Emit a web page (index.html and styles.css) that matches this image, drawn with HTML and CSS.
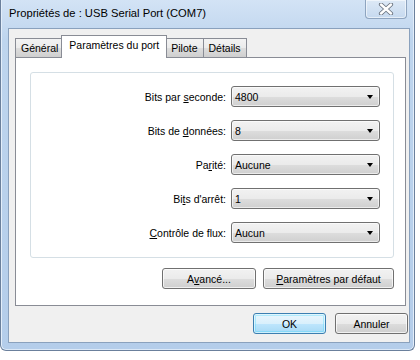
FILE: index.html
```html
<!DOCTYPE html>
<html>
<head>
<meta charset="utf-8">
<link rel="stylesheet" href="styles.css">
</head>
<body>
<div class="window">
  <div class="titlebar">
    <span class="title">Propriétés de : USB Serial Port (COM7)</span>
    <div class="close">
      <svg width="16" height="12" viewBox="0 0 16 12">
        <path d="M3 1.5 L13 10.5 M13 1.5 L3 10.5" stroke="#6b7480" stroke-width="4.2" stroke-linecap="round"/>
        <path d="M3 1.5 L13 10.5 M13 1.5 L3 10.5" stroke="#ffffff" stroke-width="2.4" stroke-linecap="round"/>
      </svg>
    </div>
  </div>
  <div class="client">
    <div class="tabs">
      <div class="tab">Général</div>
      <div class="tab active">Paramètres du port</div>
      <div class="tab">Pilote</div>
      <div class="tab">Détails</div>
    </div>
    <div class="panel">
      <div class="group">
        <div class="label">Bits par <u>s</u>econde:</div>
        <div class="combo"><span>4800</span><i class="arrow"></i></div>
        <div class="label">Bits de <u>d</u>onnées:</div>
        <div class="combo"><span>8</span><i class="arrow"></i></div>
        <div class="label">Pa<u>r</u>ité:</div>
        <div class="combo"><span>Aucune</span><i class="arrow"></i></div>
        <div class="label">Bi<u>t</u>s d'arrêt:</div>
        <div class="combo"><span>1</span><i class="arrow"></i></div>
        <div class="label"><u>C</u>ontrôle de flux:</div>
        <div class="combo"><span>Aucun</span><i class="arrow"></i></div>
      </div>
      <div class="panel-buttons">
        <div class="btn btn-adv">A<u>v</u>ancé...</div>
        <div class="btn btn-def"><u>P</u>aramètres par défaut</div>
      </div>
    </div>
    <div class="dialog-buttons">
      <div class="btn btn-ok default">OK</div>
      <div class="btn btn-ok">Annuler</div>
    </div>
  </div>
</div>
</body>
</html>
```

FILE: styles.css
```css
html, body {
  margin: 0;
  padding: 0;
  background: #ffffff;
}

body {
  font-family: "Liberation Sans", Arial, sans-serif;
  font-size: 10.5px;
  color: #000;
}

.window {
  box-sizing: border-box;
  width: 415px;
  height: 351px;
  padding: 0 4px 7px 7px;
  background: linear-gradient(to bottom, #d3e3f5 0px, #bed5ee 40px, #b4cdea 100%);
  border: 1px solid #6b809c;
  border-top: none;
  border-radius: 0 0 6px 6px;
  box-shadow: inset 1px 0 0 #e3eefa, inset -1px 0 0 #e3eefa, inset 0 -1px 0 #dbe8f7;
}

.titlebar {
  height: 28px;
  display: flex;
  align-items: flex-start;
  justify-content: space-between;
}

.title {
  margin-top: 7px;
  margin-left: 1px;
  font-size: 11.2px;
  color: #000;
}

.close {
  box-sizing: border-box;
  width: 42px;
  height: 19px;
  margin-right: 3px;
  display: flex;
  align-items: center;
  justify-content: center;
  border: 1px solid #8ea4bf;
  border-top: none;
  border-radius: 0 0 4px 4px;
  background: linear-gradient(to bottom, #dde9f6, #c6d9ef);
  box-shadow: inset 0 0 0 1px rgba(255,255,255,0.55);
}

.client {
  box-sizing: border-box;
  height: 315px;
  border: 1px solid #8aa1bd;
  background: #f0f0f0;
  display: flex;
  flex-direction: column;
}

.tabs {
  display: flex;
  align-items: flex-end;
  margin-top: 6px;
  padding-left: 6px;
  height: 22px;
  position: relative;
  z-index: 1;
}

.tab {
  box-sizing: border-box;
  height: 19px;
  padding: 3px 5px 0 5px;
  border: 1px solid #898c95;
  border-bottom: none;
  margin-right: -1px;
  background: linear-gradient(to bottom, #f3f3f3 0%, #ebebeb 50%, #dddddd 51%, #cfcfcf 100%);
  color: #000;
  white-space: nowrap;
}

.tab.active {
  height: 23px;
  margin-bottom: -1px;
  margin-left: -2px;
  margin-right: -2px;
  padding: 3px 7px 0 7px;
  background: #ffffff;
  position: relative;
  z-index: 2;
}

.panel {
  box-sizing: border-box;
  width: 391px;
  height: 249px;
  margin-left: 6px;
  border: 1px solid #898c95;
  background: #ffffff;
  display: flex;
  flex-direction: column;
}

.group {
  box-sizing: border-box;
  width: 364px;
  height: 186px;
  margin: 14px 0 0 14px;
  padding: 13px 13px 0 0;
  border: 1px solid #d5dfe5;
  border-radius: 3px;
  display: grid;
  grid-template-columns: 1fr 149px;
  grid-auto-rows: 21px;
  column-gap: 5px;
  row-gap: 13px;
  align-items: center;
}

.label {
  text-align: right;
  white-space: nowrap;
}

.combo {
  box-sizing: border-box;
  height: 21px;
  border: 1px solid #707070;
  border-radius: 3px;
  background: linear-gradient(to bottom, #f2f2f2 0%, #ebebeb 50%, #dddddd 51%, #cfcfcf 100%);
  box-shadow: inset 0 0 0 1px rgba(255,255,255,0.6);
  display: flex;
  align-items: center;
  justify-content: space-between;
  padding: 0 6px 0 3px;
}

.arrow {
  width: 0;
  height: 0;
  border-left: 3.5px solid transparent;
  border-right: 3.5px solid transparent;
  border-top: 4px solid #000;
}

.panel-buttons {
  display: flex;
  justify-content: flex-end;
  gap: 7px;
  margin-top: 10px;
  margin-right: 11px;
}

.btn {
  box-sizing: border-box;
  height: 21px;
  border: 1px solid #707070;
  border-radius: 3px;
  background: linear-gradient(to bottom, #f2f2f2 0%, #ebebeb 50%, #dddddd 51%, #cfcfcf 100%);
  box-shadow: inset 0 0 0 1px rgba(255,255,255,0.7);
  display: flex;
  align-items: center;
  justify-content: center;
  white-space: nowrap;
}

.btn-adv { width: 94px; }
.btn-def { width: 131px; }

.dialog-buttons {
  display: flex;
  justify-content: flex-end;
  gap: 9px;
  margin-top: 7px;
  padding-right: 1px;
}

.btn-ok { width: 73px; }

.btn.default {
  border-color: #3c7fb1;
  background: linear-gradient(to bottom, #eaf6fd 0%, #d9f0fc 50%, #bee6fd 51%, #a7d9f5 100%);
  box-shadow: inset 0 0 0 1px rgba(255,255,255,0.6), inset 0 0 0 2px rgba(72,216,251,0.35);
}
```
